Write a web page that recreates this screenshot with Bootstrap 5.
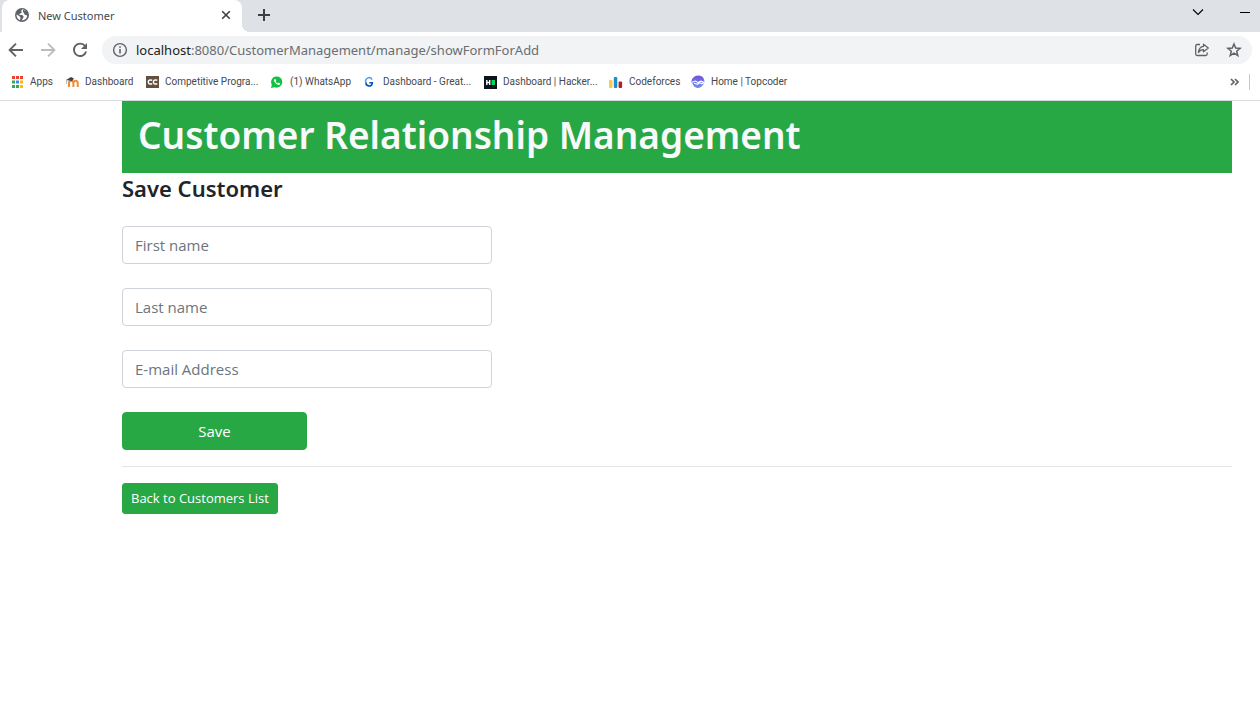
<!DOCTYPE html>
<html lang="en">
<head>
<meta charset="utf-8">
<meta name="viewport" content="width=device-width, initial-scale=1">
<title>New Customer</title>
<link href="https://cdn.jsdelivr.net/npm/bootstrap@5.3.0/dist/css/bootstrap.min.css" rel="stylesheet">
<style>
  body { font-family: "Segoe UI", "Open Sans", "Noto Sans", sans-serif; color: #212529; background: #fff; }
  svg { display: block; flex: none; }
  .icon-btn { background: none; border: 0; padding: 0; color: #5f6368; flex: none; }

  /* Tab strip */
  .tab-strip { background: #dee1e6; height: 32px; }
  .tab-open { width: 240px; margin-left: 2px; padding: 0 11px 2px 12px; background: #fff; border-radius: 8px 8px 0 0; font: 11px "Segoe UI", "Noto Sans", sans-serif; color: #45494d; position: relative; }
  .tab-open::after { content: ""; position: absolute; left: 100%; bottom: 0; width: 8px; height: 8px; background: radial-gradient(circle at 100% 0, transparent 8px, #fff 8px); }
  .tab-close { color: #3c4043; }
  .window-controls { gap: 28px; padding: 0 8px 8px 0; }

  /* Address bar */
  .toolbar { height: 36px; padding: 0 8px; }
  .address { height: 28px; margin-left: 14px; border-radius: 14px; background: #f1f3f4; padding: 0 10px; }
  .address-text { font: 13px/20px "Segoe UI", "Noto Sans", sans-serif; color: #6a6e72; text-decoration: none; }
  .address-text b { font-weight: 400; color: #202124; }

  /* Bookmarks */
  .bookmarks { height: 33px; padding: 0 10px 4px 11px; border-bottom: 1px solid #dadce0; }
  .bookmark-list { display: grid; grid-template-columns: 54px 81px 125px 93px 120px 125px 82px auto; }
  .bookmark-list a { font: 10px/16px "Segoe UI", Roboto, sans-serif; color: #45494d; text-decoration: none; white-space: nowrap; }
  .bar-end { width: 1px; height: 16px; background: #c4c7cc; }

  /* Page */
  .page { margin: 0 28px 0 122px; }
  .page-header { background: #28a745; padding: 10px 16px 14px; }
  .page-header h1 { font: 600 37px/48px "Segoe UI", "Noto Sans", sans-serif; color: #f8f9fa; margin: 0; }
  .page h2 { font: 600 22px/30px "Segoe UI", "Noto Sans", sans-serif; margin: 0 0 23px; }
  .page .form-control { font-size: 15px; line-height: 24px; border-color: #ced4da; border-radius: 4px; }
  .page .form-control::placeholder { color: #6c757d; }
  .page .btn-success { --bs-btn-bg: #28a745; --bs-btn-border-color: #28a745; --bs-btn-font-size: 15px; line-height: 24px; border-radius: 4px; }
  .page .btn-sm { --bs-btn-font-size: 13px; line-height: 21px; border-radius: 3px; }
  .page hr { margin: 16px 0; border-top: 1px solid #e5e5e5; opacity: 1; }
</style>
</head>
<body>
<header>
  <div class="tab-strip d-flex align-items-center">
    <div class="tab-open d-flex align-items-center align-self-stretch">
      <svg width="16" height="16" viewBox="0 0 16 16"><circle cx="8" cy="8" r="7" fill="#5f6368"/><path d="M8.300 2.300 7.200 4 7.800 5.500 6 6.700 5 8 8.300 8.100 9.700 9.700 9 11.200 7.500 13.400Q12.300 13.300 13.200 9L12.500 7.500H10.600L9.900 5.900 11.700 3.800Q10 2.400 8.300 2.300zM2.500 7.500 5.200 9 6.500 10.400 6 13.200Q2.500 11.500 2.500 7.500z" fill="#fff"/><path d="M9 2.500 12.500 4.500 13.500 8.500 11 7.800 10.500 6 9 5.200z" fill="#5f6368"/></svg>
      <span class="ms-2 me-auto">New Customer</span>
      <button class="icon-btn tab-close" aria-label="Close tab"><svg width="10" height="10" viewBox="0 0 10 10"><path d="M1.2 1.2 8.8 8.8M8.8 1.2 1.2 8.8" stroke="currentColor" stroke-width="1.6"/></svg></button>
    </div>
    <button class="icon-btn tab-close ms-3 pb-1" aria-label="New tab"><svg width="12" height="14" viewBox="0 0 12 14"><path d="M6 2v12M0 8h12" stroke="currentColor" stroke-width="2"/></svg></button>
    <div class="window-controls ms-auto d-flex align-items-center">
      <button class="icon-btn text-black" aria-label="Search tabs"><svg width="12" height="8" viewBox="0 0 12 8"><path d="M1 1.5 6 6.5l5-5" fill="none" stroke="currentColor" stroke-width="1.1"/></svg></button>
      <button class="icon-btn text-black ps-2" aria-label="Minimize"><svg width="12" height="8" viewBox="0 0 12 8"><path d="M0 4.5h10" stroke="currentColor"/></svg></button>
    </div>
  </div>

  <div class="toolbar d-flex align-items-center">
    <button class="icon-btn me-3" aria-label="Back"><svg width="16" height="16" viewBox="0 0 16 16"><path d="M15 8H2M8 1.6 1.6 8 8 14.4" fill="none" stroke="currentColor" stroke-width="1.9"/></svg></button>
    <button class="icon-btn me-3" aria-label="Forward"><svg width="16" height="16" viewBox="0 0 16 16"><path d="M1 8h13M8 1.6 14.4 8 8 14.4" fill="none" stroke="#babcbe" stroke-width="1.9"/></svg></button>
    <button class="icon-btn" aria-label="Reload"><svg width="16" height="16" viewBox="0 0 16 16"><path d="M13.2 4.2A6.2 6.2 0 1 0 14.1 9.5" fill="none" stroke="currentColor" stroke-width="1.9"/><path d="M15 1v6H9z" fill="currentColor"/></svg></button>
    <div class="address d-flex align-items-center flex-grow-1">
      <svg width="16" height="16" viewBox="0 0 16 16"><circle cx="8" cy="8" r="6.4" fill="none" stroke="#5f6368" stroke-width="1.4"/><path d="M8 7v4.6M8 4.2v1.6" stroke="#5f6368" stroke-width="1.6"/></svg>
      <a class="address-text ms-2 me-auto" href="#"><b>localhost</b>:8080/CustomerManagement/manage/showFormForAdd</a>
      <button class="icon-btn me-3" aria-label="Share"><svg width="16" height="16" viewBox="0 0 16 16"><path d="M6 2.500H3.200Q1.700 2.500 1.700 4v8Q1.700 13.500 3.200 13.500h8.500q1.500 0 1.500-1.500V10.500" fill="none" stroke="currentColor" stroke-width="1.300"/><path d="M9.500 2.200 14.300 6 9.500 9.800V7.600C7.200 7.600 5.500 8.700 4.500 10.500 4.800 7 6.500 4.700 9.500 4.400z" fill="none" stroke="currentColor" stroke-width="1.300" stroke-linejoin="round"/></svg></button>
      <button class="icon-btn" aria-label="Bookmark this page"><svg width="16" height="16" viewBox="0 0 16 16"><path d="M8 2 9.700 6.100 14.100 6.400 10.700 9.200 11.800 13.600 8 11.200 4.200 13.600 5.300 9.200 1.900 6.400 6.300 6.100z" fill="none" stroke="currentColor" stroke-width="1.500"/></svg></button>
    </div>
  </div>

  <nav class="bookmarks d-flex align-items-center" aria-label="Bookmarks">
    <div class="bookmark-list me-auto">
      <a class="d-flex align-items-center" href="#"><svg class="me-1" width="15" height="14" viewBox="0 0 15 14"><path d="M1 1h3v3H1zM5 1h3v3H5zM9 1h3v3H9z" fill="#ea4335"/><path d="M1 5.500h3v3H1zM1 10h3v3H1zM5 10h3v3H5z" fill="#34a853"/><path d="M5 5.500h3v3H5z" fill="#4285f4"/><path d="M9 5.500h3v3H9zM9 10h3v3H9z" fill="#fbbc05"/></svg>Apps</a>
      <a class="d-flex align-items-center" href="#"><svg class="me-1" width="16" height="14" viewBox="0 0 16 14"><path d="M4 12V8.200Q4 5.700 6.200 5.700T8.400 8.200V12M8.400 8.200q0-2.500 2.200-2.500T12.700 8.200V12" fill="none" stroke="#ee8c38" stroke-width="2"/><path d="M1 5 6 2 9 3.500 7 6 4 5.600z" fill="#444"/><path d="M1.700 5v4" stroke="#999" stroke-width=".8"/></svg>Dashboard</a>
      <a class="d-flex align-items-center" href="#"><svg class="me-1" width="15" height="14" viewBox="0 0 15 14"><path d="M0 1h13v12H0z" fill="#65503f"/><path d="M6.200 5.200Q2.300 4.200 2.300 7t3.900 1.800M11.300 5.200Q7.400 4.200 7.400 7t3.900 1.800" fill="none" stroke="#fff" stroke-width="1.500"/></svg>Competitive Progra...</a>
      <a class="d-flex align-items-center" href="#"><svg class="me-1" width="15" height="14" viewBox="0 0 15 14"><path d="M0 13 .8 9.800A5.600 5.600 0 1 1 3.500 12.200z" fill="#10c144"/><path d="M3.400 4.200Q2.600 5 3.400 6.800 5 9.600 7.500 10 9 10 9.200 8.500L7.600 7.600 6.800 8.400Q5.300 7.900 4.700 6.500L5.200 5.700 4.500 4.100z" fill="#fff"/></svg>(1) WhatsApp</a>
      <a class="d-flex align-items-center" href="#"><svg class="me-1" width="15" height="14" viewBox="0 0 15 14"><path d="M8 4.600A3.200 3.200 0 0 0 2 7.500" fill="none" stroke="#5b98e5" stroke-width="1.500"/><path d="M2 7.500A3.200 3.200 0 0 0 8.300 8.500V7.800H5.300" fill="none" stroke="#0754c5" stroke-width="1.600"/></svg>Dashboard - Great...</a>
      <a class="d-flex align-items-center" href="#"><svg class="me-1" width="15" height="14" viewBox="0 0 15 14"><path d="M0 1h13v13H0z" fill="#0e141e"/><path d="M2.800 5v5M5.700 5v5M3 7.500h3" stroke="#fff" stroke-width="1.400"/><path d="M7.500 5H11v5H7.500z" fill="#00d756"/></svg>Dashboard | Hacker...</a>
      <a class="d-flex align-items-center" href="#"><svg class="me-1" width="16" height="14" viewBox="0 0 16 14"><rect y="5" width="3.500" height="8" rx="1" fill="#fbca4d"/><rect x="4.800" y="2" width="3.500" height="11" rx="1" fill="#1d8fd0"/><rect x="9.600" y="6.500" width="3.500" height="6.500" rx="1" fill="#b91d28"/></svg>Codeforces</a>
      <a class="d-flex align-items-center" href="#"><svg class="me-1" width="16" height="14" viewBox="0 0 16 14"><defs><linearGradient id="tc" x1="0" y1="0" x2="0" y2="1"><stop offset="0" stop-color="#7a50d8"/><stop offset="1" stop-color="#6494ef"/></linearGradient></defs><path d="M1 4Q4 .2 8 .6T13 4.500L13.500 6.500 12.700 9Q10 13.400 6 13 2.500 12 1.500 8.500L.3 7z" fill="url(#tc)"/><path d="M1 7.200 4.500 6 7 7.600 10 6.200 13 7.400 11 8.800 8.500 7.800 6.500 9.300 3 8.200" fill="none" stroke="#fff" stroke-width="1.100"/></svg>Home | Topcoder</a>
    </div>
    <button class="icon-btn me-2" aria-label="More bookmarks"><svg width="11" height="8" viewBox="0 0 11 8"><path d="M1 1 4 4 1 7M5 1l3 3-3 3" fill="none" stroke="currentColor" stroke-width="1.700"/></svg></button>
    <span class="bar-end"></span>
  </nav>
</header>

<main class="page">
  <div class="page-header"><h1>Customer Relationship Management</h1></div>
  <h2>Save Customer</h2>
  <form>
    <div class="row g-0 mb-4"><div class="col-4"><input type="text" class="form-control" placeholder="First name" aria-label="First name"></div></div>
    <div class="row g-0 mb-4"><div class="col-4"><input type="text" class="form-control" placeholder="Last name" aria-label="Last name"></div></div>
    <div class="row g-0 mb-4"><div class="col-4"><input type="email" class="form-control" placeholder="E-mail Address" aria-label="E-mail Address"></div></div>
    <div class="row g-0"><div class="col-2"><button type="submit" class="btn btn-success w-100">Save</button></div></div>
  </form>
  <hr>
  <a class="btn btn-success btn-sm" href="#">Back to Customers List</a>
</main>
<script src="https://cdn.jsdelivr.net/npm/bootstrap@5.3.0/dist/js/bootstrap.bundle.min.js"></script>
</body>
</html>
